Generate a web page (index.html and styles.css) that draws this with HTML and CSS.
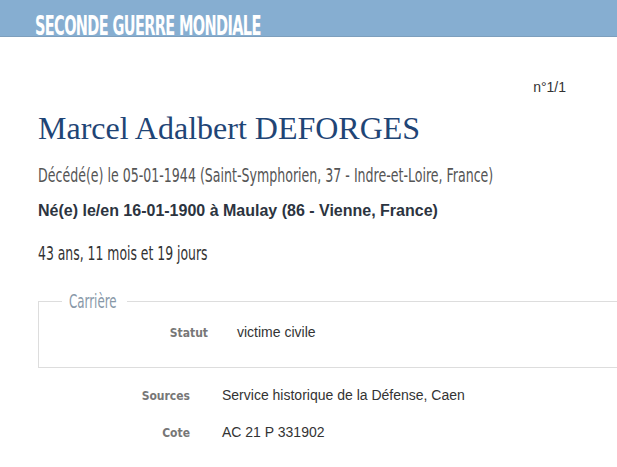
FILE: index.html
```html
<!DOCTYPE html>
<html lang="fr">
<head>
<meta charset="utf-8">
<link rel="stylesheet" href="styles.css">
</head>
<body>
<header class="band"><h2 class="band-title">SECONDE GUERRE MONDIALE</h2></header>
<main class="fiche">
  <div class="num">n°1/1</div>
  <h1 class="name">Marcel Adalbert DEFORGES</h1>
  <p class="death">Décédé(e) le 05-01-1944 (Saint-Symphorien, 37 - Indre-et-Loire, France)</p>
  <p class="birth">Né(e) le/en 16-01-1900 à Maulay (86 - Vienne, France)</p>
  <p class="age">43 ans, 11 mois et 19 jours</p>
  <fieldset class="box">
    <legend class="box-legend"><span class="box-legend-text">Carrière</span></legend>
    <div class="row row-box"><span class="lbl">Statut</span><span class="val">victime civile</span></div>
  </fieldset>
  <div class="row row-src"><span class="lbl">Sources</span><span class="val">Service historique de la Défense, Caen</span></div>
  <div class="row row-src"><span class="lbl">Cote</span><span class="val">AC 21 P 331902</span></div>
</main>
</body>
</html>
```
FILE: styles.css
```css
html, body { margin: 0; padding: 0; background: #fff; overflow: hidden; }
body { width: 617px; height: 467px; font-family: "Liberation Sans", Arial, sans-serif; }
.band { background: #86aed1; height: 36px; border-bottom: 1px solid #7d9fbd; display: flex; align-items: flex-end; padding-left: 35px; }
.band-title { margin: 0 0 -2px; color: #fff; font-family: "DejaVu Sans Condensed", "DejaVu Sans", sans-serif; font-stretch: condensed; font-weight: bold; font-size: 26px; line-height: 24px; letter-spacing: -1px; transform: scaleX(0.62); transform-origin: left bottom; white-space: nowrap; }
.fiche { padding: 0 0 0 38px; }
.num { text-align: right; padding-right: 51px; margin-top: 42px; font-size: 14px; color: #333; line-height: 16px; }
.name { margin: 16px 0 0; font-family: "Liberation Serif", "Times New Roman", serif; font-weight: normal; color: #1f4576; font-size: 32px; line-height: 34px; letter-spacing: 0; }
.death { margin: 18px 0 0; font-family: "DejaVu Sans Condensed", "DejaVu Sans", sans-serif; font-stretch: condensed; font-weight: 300; color: #555; font-size: 20px; line-height: 24px; transform: scaleX(0.70); transform-origin: left; white-space: nowrap; }
.birth { margin: 14px 0 0; font-weight: bold; color: #2c3440; font-size: 16px; line-height: 19px; }
.age { margin: 21px 0 0; font-family: "DejaVu Sans Condensed", "DejaVu Sans", sans-serif; font-stretch: condensed; color: #333; font-size: 20px; line-height: 24px; transform: scaleX(0.69); transform-origin: left; white-space: nowrap; }
.box { margin: 25px 0 0; border: 1px solid #ddd; border-right: none; padding: 0 0 27px 0; min-height: 40px; }
.box-legend { margin-left: 23px; padding: 0 10px 0 7px; width: 48px; font-family: "DejaVu Sans Condensed", "DejaVu Sans", sans-serif; font-stretch: condensed; font-weight: 300; color: #8898a8; font-size: 20px; line-height: 22px; }
.box-legend-text { display: inline-block; white-space: nowrap; transform: scaleX(0.66); transform-origin: left; }
.row { display: flex; align-items: baseline; }
.lbl { font-family: "DejaVu Sans Condensed", "DejaVu Sans", sans-serif; font-stretch: condensed; font-weight: bold; color: #777; font-size: 12px; text-align: right; }
.val { font-size: 14px; color: #333; }
.row-box .lbl { width: 169px; }
.row-box .val { margin-left: 29px; }
.row-box { margin-top: 12px; }
.row-src .lbl { width: 152px; }
.row-src .val { margin-left: 32px; }
.row-src { margin-top: 19px; }
.row-src + .row-src { margin-top: 21px; }
```
